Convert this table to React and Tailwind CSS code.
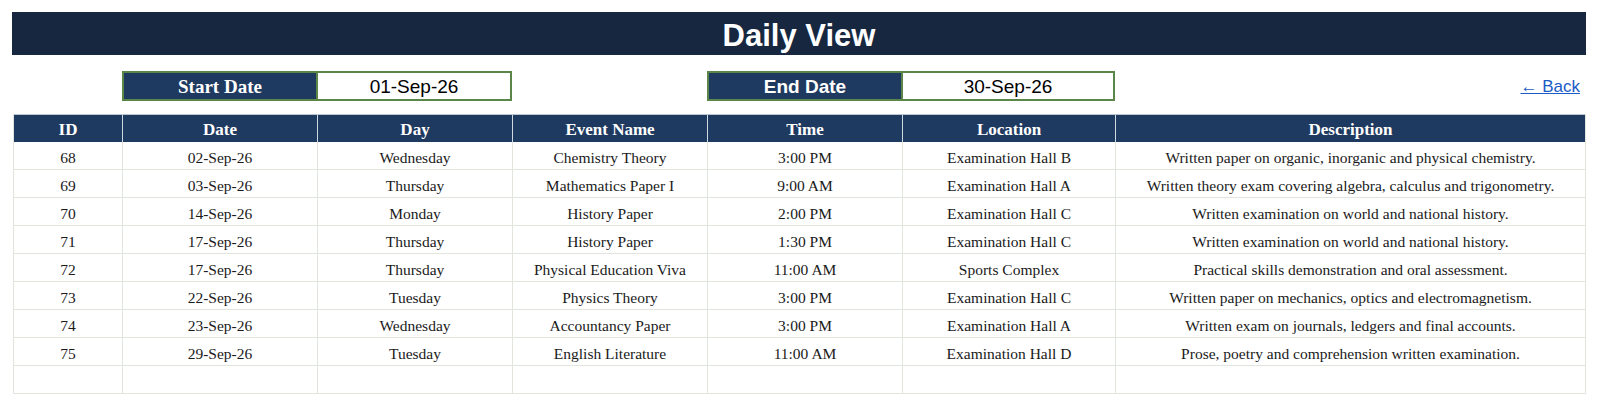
import React from "react";

const rows = [
  ["68", "02-Sep-26", "Wednesday", "Chemistry Theory", "3:00 PM", "Examination Hall B", "Written paper on organic, inorganic and physical chemistry."],
  ["69", "03-Sep-26", "Thursday", "Mathematics Paper I", "9:00 AM", "Examination Hall A", "Written theory exam covering algebra, calculus and trigonometry."],
  ["70", "14-Sep-26", "Monday", "History Paper", "2:00 PM", "Examination Hall C", "Written examination on world and national history."],
  ["71", "17-Sep-26", "Thursday", "History Paper", "1:30 PM", "Examination Hall C", "Written examination on world and national history."],
  ["72", "17-Sep-26", "Thursday", "Physical Education Viva", "11:00 AM", "Sports Complex", "Practical skills demonstration and oral assessment."],
  ["73", "22-Sep-26", "Tuesday", "Physics Theory", "3:00 PM", "Examination Hall C", "Written paper on mechanics, optics and electromagnetism."],
  ["74", "23-Sep-26", "Wednesday", "Accountancy Paper", "3:00 PM", "Examination Hall A", "Written exam on journals, ledgers and final accounts."],
  ["75", "29-Sep-26", "Tuesday", "English Literature", "11:00 AM", "Examination Hall D", "Prose, poetry and comprehension written examination."],
  ["", "", "", "", "", "", ""],
];

const headers = ["ID", "Date", "Day", "Event Name", "Time", "Location", "Description"];

const cols = "grid grid-cols-[109px_195px_195px_195px_195px_213px_469px]";

export default function App() {
  return (
    <div className="w-[1600px] h-[406px] bg-white pl-[12px] pt-[12px] overflow-hidden">
      <div className="w-[1574px] h-[43px] bg-[#16273f] flex items-center justify-center pt-[4px]">
        <span className="text-white font-bold text-[31px] font-['Liberation_Sans',Arial,sans-serif] leading-none">
          Daily View
        </span>
      </div>

      <div className={`${cols} ml-[1px] mt-[16px] h-[30px]`}>
        <div />
        <div className="col-span-2 flex border-2 border-[#5a8649]">
          <div className="w-[194px] bg-[#1f3a60] border-r-2 border-[#5a8649] flex items-center justify-center">
            <span className="text-white font-bold text-[19px] font-['Liberation_Serif','Times_New_Roman',serif] leading-none">
              Start Date
            </span>
          </div>
          <div className="flex-1 bg-white flex items-center justify-center">
            <span className="text-black text-[19px] font-['Liberation_Sans',Arial,sans-serif] leading-none">
              01-Sep-26
            </span>
          </div>
        </div>
        <div />
        <div className="col-span-2 flex border-2 border-[#5a8649]">
          <div className="w-[194px] bg-[#1f3a60] border-r-2 border-[#5a8649] flex items-center justify-center">
            <span className="text-white font-bold text-[19px] font-['Liberation_Sans',Arial,sans-serif] leading-none">
              End Date
            </span>
          </div>
          <div className="flex-1 bg-white flex items-center justify-center">
            <span className="text-black text-[19px] font-['Liberation_Sans',Arial,sans-serif] leading-none">
              30-Sep-26
            </span>
          </div>
        </div>
        <div className="flex items-center justify-end pr-[4px] pt-[1px]">
          <a
            href="#"
            className="text-[#1a5bc6] underline text-[17px] font-['Liberation_Sans',Arial,sans-serif] leading-none"
          >
            ← Back
          </a>
        </div>
      </div>

      <div className="ml-[1px] mt-[13px] w-[1573px] border border-[#e0e6dd] font-['Liberation_Serif','Times_New_Roman',serif]">
        <div className={`${cols} h-[28px] bg-[#1f3a60] border-t border-[#b9c6d1] -mt-px`}>
          {headers.map((h, i) => (
            <div
              key={h}
              className={`flex items-center justify-center pt-[1px] text-white font-bold text-[17px] leading-none ${i < 6 ? "border-r border-[#cdd8e0]" : ""}`}
            >
              {h}
            </div>
          ))}
        </div>
        {rows.map((r, ri) => (
          <div
            key={ri}
            className={`${cols} ${ri < rows.length - 1 ? "h-[28px] border-b border-[#e0e6dd]" : "h-[27px]"}`}
          >
            {r.map((c, ci) => (
              <div
                key={ci}
                className={`flex items-center justify-center pt-[4px] text-[#1a1a1a] text-[15.5px] leading-none whitespace-nowrap ${ci < 6 ? "border-r border-[#e0e6dd]" : ""}`}
              >
                {c}
              </div>
            ))}
          </div>
        ))}
      </div>
    </div>
  );
}
